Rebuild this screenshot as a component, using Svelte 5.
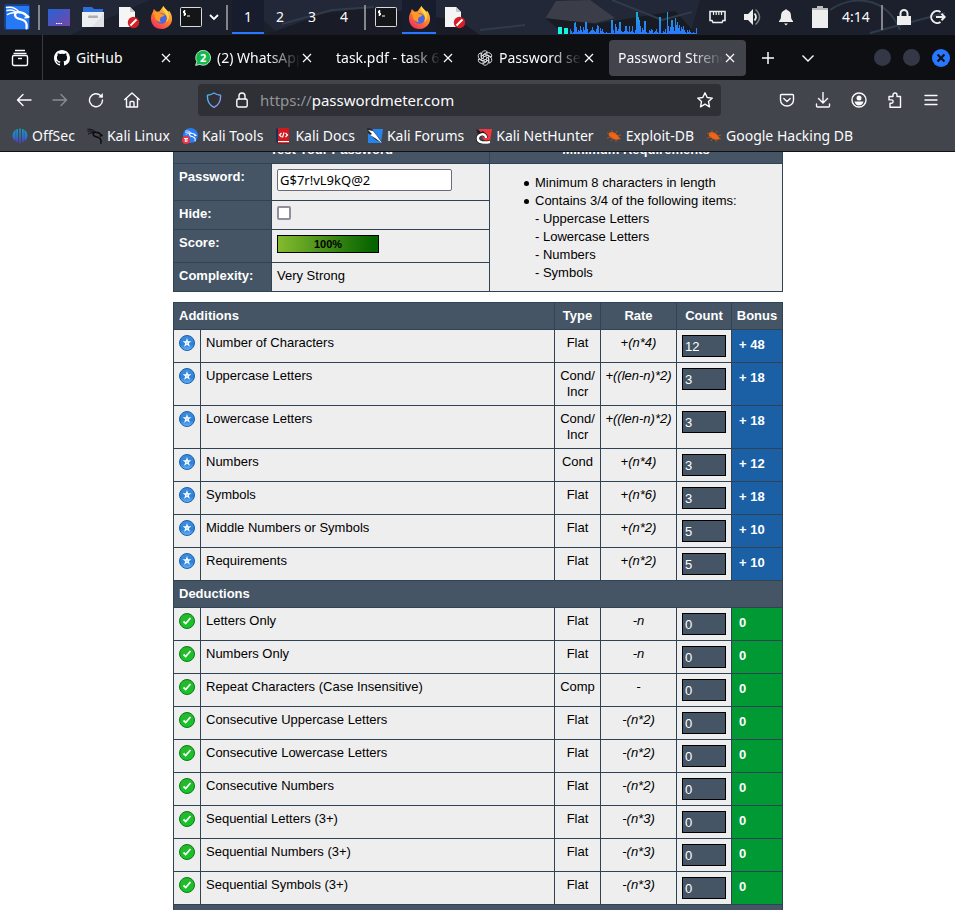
<script>
  const additions = [
    ['Number of Characters', 'Flat', '+(n*4)', '12', '+ 48'],
    ['Uppercase Letters', 'Cond/ Incr', '+((len-n)*2)', '3', '+ 18'],
    ['Lowercase Letters', 'Cond/ Incr', '+((len-n)*2)', '3', '+ 18'],
    ['Numbers', 'Cond', '+(n*4)', '3', '+ 12'],
    ['Symbols', 'Flat', '+(n*6)', '3', '+ 18'],
    ['Middle Numbers or Symbols', 'Flat', '+(n*2)', '5', '+ 10'],
    ['Requirements', 'Flat', '+(n*2)', '5', '+ 10'],
  ];
  const deductions = [
    ['Letters Only', 'Flat', '-n', '0', '0'],
    ['Numbers Only', 'Flat', '-n', '0', '0'],
    ['Repeat Characters (Case Insensitive)', 'Comp', '-', '0', '0'],
    ['Consecutive Uppercase Letters', 'Flat', '-(n*2)', '0', '0'],
    ['Consecutive Lowercase Letters', 'Flat', '-(n*2)', '0', '0'],
    ['Consecutive Numbers', 'Flat', '-(n*2)', '0', '0'],
    ['Sequential Letters (3+)', 'Flat', '-(n*3)', '0', '0'],
    ['Sequential Numbers (3+)', 'Flat', '-(n*3)', '0', '0'],
    ['Sequential Symbols (3+)', 'Flat', '-(n*3)', '0', '0'],
  ];
  const tabs = [
    { icon: 'github', title: 'GitHub' },
    { icon: 'whatsapp', title: '(2) WhatsApp' },
    { icon: '', title: 'task.pdf - task 6.' },
    { icon: 'openai', title: 'Password secu' },
    { icon: '', title: 'Password Streng', active: true },
  ];
  const bookmarks = [
    ['offsec', 'OffSec'],
    ['kali', 'Kali Linux'],
    ['tools', 'Kali Tools'],
    ['docs', 'Kali Docs'],
    ['forums', 'Kali Forums'],
    ['nethunter', 'Kali NetHunter'],
    ['bug', 'Exploit-DB'],
    ['bug', 'Google Hacking DB'],
  ];
  // heights of the sound monitor's bars, one pixel wide each
  const levels = [5, 3, 1, 2, 11, 12, 7, 2, 4, 3, 8, 4, 2, 7, 4, 12, 12, 5, 1, 2, 3, 4, 7, 4, 3, 2, 5, 9, 8, 1, 6, 3, 5, 2, 1, 1, 2, 1, 1, 1, 1, 14, 14, 4, 1, 10, 7, 3, 5, 12, 12, 3, 2, 2, 3, 8, 8, 3, 2, 8, 2, 3, 8, 2, 1, 4, 22, 22, 17, 14, 8, 2, 6, 4, 13, 13, 2, 1, 1, 4, 3, 5, 4, 1, 2, 3, 5, 2, 1, 17, 17, 1, 1, 3, 2, 5, 1, 22, 8, 3, 7, 14, 14, 7, 3, 16, 9, 12, 6, 9, 3, 7, 5, 8, 4, 2, 1, 4, 2, 4, 2, 1, 1, 2, 1, 1, 6];
  let password = $state('G$7r!vL9kQ@2');
  let hidden = $state(false);
</script>

{#snippet dragon(color)}
  <g fill="none" stroke={color} stroke-linecap="round" stroke-linejoin="round">
    <path stroke-width="1.5" d="M1 2c5-1 10 1 13 5M1.500 5c4-1 7 0 9 1.500M2 9c3-2 6-2 9-1.500" />
    <path stroke-width="2.200" d="M10 7c4-1 8 0 11 3l2 1.500-3 .5M10 7c-2 5 2 6 6 7 4 1 6 4 5 9" />
    <path stroke-width="1" d="M17 8c2-1 3 0 5 2" />
  </g>
{/snippet}

{#snippet firefox()}
  <svg width="23" height="23" viewBox="0 0 24 24" aria-hidden="true">
    <defs>
      <linearGradient id="fox" x1=".9" y1="0" x2=".2" y2="1">
        <stop offset="0" stop-color="#ffe35a" /><stop offset=".45" stop-color="#ff8a25" /><stop offset="1" stop-color="#f32b5e" />
      </linearGradient>
    </defs>
    <path fill="url(#fox)" d="M3 6l1-3 3 3 3-.500L14 0c1 3 4 4 5 6l1-1c3 4 4 9 2 13-2 4-6 6-10 6C5 24 1 19 1 13c0-3 1-5 2-7z" />
    <circle cx="12" cy="13" r="5.500" fill="#4a67df" />
    <path fill="#ff9a28" d="M3 7c3-2 6-1 8 1l4 1c0 2-3 2-4 3-1 2-1 4 1 5-5 0-7-4-7-7z" />
    <path fill="#ffd74b" d="M14 0c-1 4 1 6 3 9 2 3 1 6-1 8 3-1 5-5 3-10-1-3-4-4-5-7z" />
  </svg>
{/snippet}

{#snippet terminal()}
  <svg width="22" height="20" viewBox="0 0 22 20" aria-hidden="true">
    <rect x=".5" y=".5" width="21" height="19" rx="1" fill="#141517" stroke="#d8dadb" />
    <path d="M5.500 4H3.500v2h2v2h-2M4.500 3v6M7 9h3" fill="none" stroke="#fff" />
  </svg>
{/snippet}

{#snippet editor()}
  <svg width="22" height="23" viewBox="0 0 22 23" aria-hidden="true">
    <path fill="#f5f5f5" d="M1 1h11l5 5v15H1z" /><path fill="#c7c9cc" d="M12 1l5 5h-5z" />
    <circle cx="15.500" cy="16.500" r="5.700" fill="#d51e25" /><path stroke="#fff" stroke-width="2" d="M12.500 19.500l6-6" />
  </svg>
{/snippet}

{#snippet chevron()}
  <svg width="14" height="14" viewBox="0 0 14 14" fill="none" stroke="currentColor" stroke-width="1.400" aria-hidden="true"><path d="M1.500 4.500L7 10l5.500-5.500" /></svg>
{/snippet}

{#snippet favicon(name)}
  <svg width="16" height="16" viewBox="0 0 16 16" aria-hidden="true">
    {#if name === 'github'}
      <path fill="#fff" d="M8 0C3.580 0 0 3.580 0 8c0 3.540 2.290 6.530 5.470 7.590.4.070.55-.170.55-.380V13.720c-2.230.480-2.700-1.070-2.700-1.070-.360-.930-.890-1.170-.890-1.170-.730-.500.050-.490.050-.490.800.060 1.230.830 1.230.830.710 1.220 1.870.870 2.330.660.070-.520.280-.870.510-1.070-1.780-.200-3.640-.890-3.640-3.950 0-.870.310-1.590.820-2.150-.080-.200-.360-1.020.080-2.120 0 0 .670-.210 2.200.820a7.600 7.600 0 0 1 4 0c1.530-1.040 2.200-.820 2.200-.820.440 1.100.160 1.920.080 2.120.510.560.820 1.270.820 2.150 0 3.070-1.870 3.750-3.650 3.950.290.250.540.730.540 1.480v2.200c0 .210.150.460.550.380A8 8 0 0 0 16 8c0-4.420-3.580-8-8-8z" />
    {:else if name === 'whatsapp'}
      <path fill="#12b94c" stroke="#e9f9ee" stroke-width=".8" d="M.6 15.400l1.200-3.800A7.400 7.400 0 1 1 4.800 14.400z" />
      <text x="8.200" y="12" text-anchor="middle" fill="#fff" font-size="11" font-weight="700" font-family="Noto Sans, sans-serif">2</text>
    {:else if name === 'openai'}
      <g fill="none" stroke="#e8e8e8" stroke-width=".85">
        {#each [0, 60, 120, 180, 240, 300] as turn}
          <path transform="rotate({turn} 8 8)" d="M4.600 9.800V4A3.300 3.300 0 0 1 10.500 2L6.400 4.400v4.100" />
        {/each}
      </g>
    {:else if name === 'offsec'}
      <defs><linearGradient id="off" gradientUnits="userSpaceOnUse" x1="0" y1="0" x2="0" y2="16"><stop stop-color="#159fb2" /><stop offset=".5" stop-color="#2777ce" /><stop offset="1" stop-color="#6330c4" /></linearGradient></defs>
      <g fill="url(#off)"><path d="M6 1v13C2.500 13.500.5 10.500.5 7.500S2.500 1.500 6 1z" /><path d="M7.200.6h1.600v15H7.200z" /><path d="M10 1v13c3.500-.5 5.500-3.500 5.500-6.500S13.500 1.500 10 1z" /></g>
      <path stroke="#42454c" stroke-width=".5" d="M3.800 1v13M12.200 1v13" />
    {:else if name === 'kali'}
      <g transform="scale(.66)">{@render dragon('#0b0c0e')}</g>
    {:else if name === 'tools'}
      <circle cx="8.500" cy="7.500" r="7.500" fill="#2b7bf3" /><g transform="translate(3 2) scale(.48)">{@render dragon('#fff')}</g>
      <circle cx="4" cy="12" r="4" fill="#ef3340" /><path stroke="#fff" d="M2 10.500h4M3.300 10.500v3.500M4.900 10.500v3.500" />
    {:else if name === 'docs'}
      <path fill="#173056" d="M1 1l2-1v15l-2-1z" /><path fill="#d31920" d="M3 0h11v13H3z" /><path fill="#fff" d="M3 13h11v1.500H3z" /><path fill="#9d0e16" d="M3 14.500h11V16H2z" />
      <path fill="none" stroke="#fff" stroke-width="1.200" d="M6.500 5L4.500 7l2 2M10.500 5l2 2-2 2M9 4.500l-1.500 5" />
    {:else if name === 'forums'}
      <path fill="#2584ed" d="M1 1h15l-2 14H1z" /><path fill="#23262b" d="M0 0l5 1 10 13-6-2L1 5z" /><path fill="#fff" d="M1 2l5 1 4 5 5 7-7-5-5-3 2-1z" />
    {:else if name === 'nethunter'}
      <path fill="#f0363e" d="M3 1h13l-2 13-4 1L4 6z" /><path fill="#1c1d20" d="M0 1l5 3 2-1 2 2-6 4z" /><path fill="none" stroke="#1c1d20" stroke-width="4" d="M10 10c0-6-9-4-8 1 0 4 7 4 12 3" /><path fill="none" stroke="#fff" stroke-width="2.500" d="M10 10c0-6-9-4-8 1 0 4 7 4 12 3" />
    {:else}
      <path fill="#ee6514" d="M3 5c2-2 5-1 7 1 2 1 3 3 4 5-3 1-6 1-8-1C4 9 2 8 3 5z" />
      <path fill="none" stroke="#cf5a19" stroke-width=".7" d="M6 6V2M9 6l2-3M5 6L1 5M5 9l-4 1M7 10l-2 3M10 11v3M11 8l4-1M12 10l3 1" />
    {/if}
  </svg>
{/snippet}

{#snippet rows(list, kind)}
  {#each list as [name, type, rate, count, bonus]}
    <tr>
      <td>
        <svg width="16" height="16" viewBox="0 0 16 16" role="img" aria-label={kind}>
          {#if kind === 'exceptional'}
            <circle cx="8" cy="8" r="7.500" fill="url(#blueBall)" stroke="#1862ae" />
            <path fill="#fff" d="M8 3l1.100 3.200h3.300L9.800 8.300l1.100 3.500L8 9.800l-2.900 2 1.100-3.500-2.600-2.100h3.300z" /><circle cx="8" cy="8" r=".7" fill="#72b5f3" />
          {:else}
            <circle cx="8" cy="8" r="7.500" fill="url(#greenBall)" stroke="#087c16" />
            <path fill="none" stroke="#fff" stroke-width="1.700" d="M4.500 8.500l2.200 2L11.500 5" />
          {/if}
        </svg>
      </td>
      <td>{name}</td>
      <td class="mid">{type}</td>
      <td class="mid rate">{rate}</td>
      <td><input class="count" readonly value={count} aria-label="{name} count" /></td>
      <td class="bonus {kind}">{bonus}</td>
    </tr>
  {/each}
{/snippet}

<svg class="defs" width="0" height="0" aria-hidden="true">
  <defs>
    <linearGradient id="blueBall" x2="0" y2="1"><stop stop-color="#3f8ddd" /><stop offset=".6" stop-color="#2c82dc" /><stop offset="1" stop-color="#6bb4f4" /></linearGradient>
    <linearGradient id="greenBall" x2="0" y2="1"><stop stop-color="#29b52d" /><stop offset="1" stop-color="#14c62a" /></linearGradient>
  </defs>
</svg>

<div class="screen">
  <header class="panel">
    <svg class="wallpaper" viewBox="0 0 955 35" preserveAspectRatio="none" aria-hidden="true">
      <path fill="#222838" d="M0 0h955v35H0z" /><path fill="#1b202c" d="M70 35L150 0h90l40 35zM700 0h255v35H690z" />
      <path fill="#191c26" d="M265 35l60-22 50-6 85 14 20 14z" /><path fill="#3b3e48" d="M556 1l34-1 25 18-20 5-50-4z" /><path fill="#181b23" d="M545 18l50 6 80-13 22 24H565z" />
      <path fill="none" stroke="#303b4a" stroke-width="2" d="M282 24l50-14 42-3M480 30l45-5M612 0l50 20 30-8M870 33l75-20M830 10c20-14 55-16 70 20" />
    </svg>
    <nav class="launchers" aria-label="Launchers">
      <button class="w34" aria-label="Applications">
        <svg width="28" height="28" viewBox="0 0 28 28" aria-hidden="true"><rect x="1" y="1" width="26" height="26" rx="3" fill="#1158cc" opacity=".55" /><path fill="#2678f5" d="M3 3h23v23H3z" /><g transform="translate(2.500 2.500)">{@render dragon('#fff')}</g></svg>
      </button>
      <span class="sep"></span>
      <button class="w30" aria-label="Show desktop">
        <svg width="22" height="17" viewBox="0 0 22 17" aria-hidden="true"><defs><linearGradient id="desk" y2="1"><stop stop-color="#2862d5" /><stop offset="1" stop-color="#7447a8" /></linearGradient></defs><path fill="url(#desk)" d="M0 0h22v17H0z" /><path stroke="#fff" stroke-dasharray="1.500 .800" d="M8 14.500h6" /></svg>
      </button>
      <button class="w38" aria-label="Files">
        <svg width="22" height="20" viewBox="0 0 22 20" aria-hidden="true"><path fill="#2b6fdd" d="M1 0h9l2 2h9v6H1z" /><path fill="#eceef0" d="M0 5h22v15H0z" /><path fill="#dfe1e4" d="M22 6v14H10z" /><rect x="6" y="8.500" width="10" height="2.500" rx="1" fill="#aaaeb4" /></svg>
      </button>
      <button class="w34" aria-label="Text editor">{@render editor()}</button>
      <button class="w30" aria-label="Firefox">{@render firefox()}</button>
      <button class="w30" aria-label="Terminal">{@render terminal()}</button>
      <button class="w16" aria-label="More terminals"><svg width="10" height="10" viewBox="0 0 10 10" fill="none" stroke="#fff" stroke-width="1.800" aria-hidden="true"><path d="M1 3l4 4 4-4" /></svg></button>
      <span class="sep"></span>
      {#each [1, 2, 3, 4] as space}
        <button class="w32" class:current={space === 1}>{space}</button>
      {/each}
      <span class="sep"></span>
      <button class="w32" aria-label="Terminal window">{@render terminal()}</button>
      <button class="w34 current" aria-label="Firefox window">{@render firefox()}</button>
      <button class="w38" aria-label="Editor window">{@render editor()}</button>
    </nav>
    <div class="tray">
      <svg class="meter" width="141" height="24" viewBox="0 0 141 24" aria-hidden="true">
        <defs><linearGradient id="sound" gradientUnits="userSpaceOnUse" x1="0" y1="24" x2="0" y2="0"><stop stop-color="#2979ff" /><stop offset=".4" stop-color="#258af0" /><stop offset="1" stop-color="#12b5d8" /></linearGradient></defs>
        <path fill="#13f5df" d="M0 17h4v7H0zM6 18h4v6H6z" />
        {#each levels as level, i}<rect x={12 + i} y={24 - level} width="1" height={level} fill="url(#sound)" />{/each}
      </svg>
      <button class="w36" aria-label="Network"><svg width="17" height="15" viewBox="0 0 17 15" aria-hidden="true"><path fill="none" stroke="#eee" stroke-width="1.600" d="M1 1.500h15v9h-2l-1 2H4l-1-2H1z" /><path stroke="#eee" stroke-width="1.200" d="M4.500 1v4M7.200 1v4M9.800 1v4M12.500 1v4" /></svg></button>
      <button class="w34" aria-label="Volume"><svg width="19" height="18" viewBox="0 0 19 18" aria-hidden="true"><path fill="#eee" d="M1 6h4l5-5v16l-5-5H1z" /><path fill="none" stroke="#eee" stroke-width="1.800" d="M11.500 5.500q3 3.500 0 7" /><path fill="none" stroke="#777b82" stroke-width="1.600" d="M12.500 1.500q8 7.500 0 15" /></svg></button>
      <button class="w34" aria-label="Notifications"><svg width="16" height="17" viewBox="0 0 16 17" aria-hidden="true"><path fill="#eee" d="M8 0l1 1c3 1 4 3 4 6 0 3 1 4 2 5v1H1v-1c1-1 2-2 2-5 0-3 1-5 4-6zM6 14.500h4l-2 2z" /></svg></button>
      <button class="w34" aria-label="Battery"><svg width="16" height="22" viewBox="0 0 16 22" aria-hidden="true"><path fill="#bbb" d="M5 0h6v2h5v3H0V2h5z" /><path fill="#eee" d="M0 4h16v18H0z" /></svg></button>
      <time>4:14</time>
      <span class="sep"></span>
      <button class="w34" aria-label="Lock"><svg width="14" height="16" viewBox="0 0 14 16" aria-hidden="true"><path fill="none" stroke="#eee" stroke-width="2" d="M3.500 8V4.500a3.500 3.500 0 0 1 7 0V8" /><path fill="#eee" d="M0 7h14v9H0z" /></svg></button>
      <button class="w34" aria-label="Log out"><svg width="16" height="16" viewBox="0 0 16 16" fill="none" stroke="#eee" stroke-width="2" aria-hidden="true"><path d="M10.500 3A6 6 0 1 0 10.500 13M6 8h8M11.500 4.800L14.700 8l-3.200 3.200" /></svg></button>
    </div>
  </header>

  <div class="tabbar">
    <button class="recent" aria-label="Recent browsing">
      <svg width="18" height="18" viewBox="0 0 18 18" fill="none" stroke="currentColor" stroke-width="1.400" aria-hidden="true"><path d="M4 1.500h10M2.500 4.500h13" /><rect x="1.500" y="6.500" width="15" height="10" rx="1.500" /><path d="M7 9.500h4" /></svg>
    </button>
    <div class="tabs">
      {#each tabs as tab}
        <div class="tab" class:active={tab.active}>
          {#if tab.icon}{@render favicon(tab.icon)}{/if}
          <a href="#{tab.icon || 'page'}">{tab.title}</a>
          <button aria-label="Close {tab.title}"><svg width="10" height="10" viewBox="0 0 10 10" stroke="currentColor" stroke-width="1.200" aria-hidden="true"><path d="M1 1l8 8M9 1L1 9" /></svg></button>
        </div>
      {/each}
    </div>
    <button class="w40" aria-label="New tab"><svg width="12" height="12" viewBox="0 0 12 12" stroke="currentColor" stroke-width="1.500" aria-hidden="true"><path d="M6 0v12M0 6h12" /></svg></button>
    <button class="w40" aria-label="List all tabs">{@render chevron()}</button>
    <div class="window">
      <button aria-label="Minimise"></button>
      <button aria-label="Maximise"></button>
      <button class="close" aria-label="Close window"><svg width="8" height="8" viewBox="0 0 8 8" stroke="#10131a" stroke-width="2.200" aria-hidden="true"><path d="M.5.5l7 7M7.500.5l-7 7" /></svg></button>
    </div>
  </div>

  <div class="toolbar">
    <div class="nav">
      <button aria-label="Back"><svg width="16" height="16" viewBox="0 0 16 16" aria-hidden="true"><path d="M15 8H1.500M7 2.500L1.500 8 7 13.500" /></svg></button>
      <button class="dim" aria-label="Forward"><svg width="16" height="16" viewBox="0 0 16 16" aria-hidden="true"><path d="M1 8h13.500M9 2.500L14.500 8 9 13.500" /></svg></button>
      <button aria-label="Reload"><svg width="16" height="16" viewBox="0 0 16 16" aria-hidden="true"><path d="M14.500 8A6.500 6.500 0 1 1 12.500 3.500L14 5" /><path d="M14.800 1v4.500h-4.500z" fill="currentColor" stroke="none" /></svg></button>
      <button aria-label="Home"><svg width="16" height="16" viewBox="0 0 16 16" aria-hidden="true"><path d="M.8 7.500L8 1l7.200 6.500M2.500 6.500v8.500h11V6.500M6 15v-4.500q0-1 1-1h2q1 0 1 1V15" /></svg></button>
      <div class="url">
        <svg width="16" height="16" viewBox="0 0 16 16" aria-hidden="true"><defs><linearGradient id="shield" y2="1"><stop stop-color="#39bdf4" /><stop offset="1" stop-color="#a18cf0" /></linearGradient></defs><path stroke="url(#shield)" d="M8 1q3 1.800 6.500 2.200C15 9 13 13 8 15.300 3 13 1 9 1.500 3.200Q5 2.800 8 1z" /></svg>
        <svg class="lock" width="12" height="16" viewBox="0 0 12 16" aria-hidden="true"><path d="M3 7V4a3 3 0 0 1 6 0v3" /><rect x=".8" y="7" width="10.400" height="8" rx="1.500" /></svg>
        <a href="https://passwordmeter.com"><span>https://</span>passwordmeter.com</a>
        <svg width="16" height="16" viewBox="0 0 16 16" aria-hidden="true"><path d="M8 .8l2.200 4.700 5.100.6-3.800 3.500 1 5.200L8 12.200l-4.500 2.600 1-5.200L.7 6.100l5.100-.6z" /></svg>
      </div>
      <button aria-label="Pocket"><svg width="16" height="16" viewBox="0 0 16 16" aria-hidden="true"><path d="M2.500 2.500h11q1 0 1 1V8a6.500 6 0 0 1-13 0V3.500q0-1 1-1zM4.800 6.500L8 9.500l3.200-3" /></svg></button>
      <button aria-label="Downloads"><svg width="16" height="16" viewBox="0 0 16 16" aria-hidden="true"><path d="M8 .5v10M3.500 6.500L8 11l4.500-4.500M1.500 12v2q0 1 1 1h11q1 0 1-1v-2" /></svg></button>
      <button aria-label="Account"><svg width="16" height="16" viewBox="0 0 16 16" aria-hidden="true"><circle cx="8" cy="8" r="7" /><circle cx="8" cy="6" r="2.500" fill="currentColor" stroke="none" /><path d="M3.500 9.500h9q-1 4-4.500 4t-4.500-4z" fill="currentColor" stroke="none" /></svg></button>
      <button aria-label="Extensions"><svg width="16" height="16" viewBox="0 0 16 16" aria-hidden="true"><path d="M6 4.500V3a2 2 0 0 1 4 0v1.500h3.500v10.700H3v-4h1.500a1.600 1.600 0 0 0 0-3.300H2V4.500z" /></svg></button>
      <button aria-label="Menu"><svg width="14" height="16" viewBox="0 0 14 16" aria-hidden="true"><path d="M1 3.500h12M1 8h12M1 12.500h12" /></svg></button>
    </div>
    <nav class="bookmarks" aria-label="Bookmarks">
      {#each bookmarks as [icon, name]}
        <a href="#{icon}">{@render favicon(icon)}{name}</a>
      {/each}
    </nav>
  </div>

  <main>
    <table class="summary">
      <colgroup><col class="c98" /><col /><col class="c293" /></colgroup>
      <thead><tr><th class="mid" colspan="2">Test Your Password</th><th class="mid">Minimum Requirements</th></tr></thead>
      <tbody>
        <tr class="tall">
          <th><label for="pw">Password:</label></th>
          <td>
            {#if hidden}<input id="pw" class="pw" type="password" bind:value={password} />
            {:else}<input id="pw" class="pw" type="text" spellcheck="false" bind:value={password} />{/if}
          </td>
          <td rowspan="4">
            <ul>
              <li>Minimum 8 characters in length</li>
              <li>Contains 3/4 of the following items:<br />- Uppercase Letters<br />- Lowercase Letters<br />- Numbers<br />- Symbols</li>
            </ul>
          </td>
        </tr>
        <tr class="short"><th><label for="hide">Hide:</label></th><td><input id="hide" type="checkbox" bind:checked={hidden} /></td></tr>
        <tr class="middle"><th>Score:</th><td><div class="score">100%</div></td></tr>
        <tr class="short"><th>Complexity:</th><td>Very Strong</td></tr>
      </tbody>
    </table>

    <table>
      <colgroup><col class="c27" /><col /><col class="c46" /><col class="c76" /><col class="c55" /><col class="c51" /></colgroup>
      <thead><tr><th colspan="2">Additions</th><th class="mid">Type</th><th class="mid">Rate</th><th class="mid">Count</th><th class="mid">Bonus</th></tr></thead>
      <tbody>
        {@render rows(additions, 'exceptional')}
        <tr><th colspan="6">Deductions</th></tr>
        {@render rows(deductions, 'sufficient')}
        <tr class="short"><th colspan="6"></th></tr>
      </tbody>
    </table>
  </main>
</div>

<style>
  :global(body) { margin: 0; background: #fff; }
  * { box-sizing: border-box; }
  svg { display: block; flex: none; }
  .defs { position: absolute; }
  .screen { height: 100vh; display: flex; flex-direction: column; overflow: hidden; font: 14px/20px "Noto Sans", sans-serif; color: #fbfbfe; }
  button { display: flex; align-items: center; justify-content: center; flex: none; padding: 0; border: 0; background: none; color: inherit; font: inherit; }
  a { color: inherit; text-decoration: none; }

  .panel { position: relative; flex: none; height: 35px; display: flex; justify-content: space-between; background: #1e232f; }
  .wallpaper { position: absolute; inset: 0; width: 100%; height: 100%; }
  .launchers, .tray { position: relative; display: flex; align-items: stretch; height: 34px; }
  .sep { width: 10px; flex: none; background: linear-gradient(#84868b, #84868b) center / 2px 25px no-repeat; }
  .current { background: #171d2d; border-bottom: 2px solid #2777ff; padding-top: 2px; }
  .w16 { width: 16px; } .w30 { width: 30px; } .w32 { width: 32px; } .w34 { width: 34px; } .w36 { width: 36px; } .w38 { width: 38px; } .w40 { width: 40px; }
  .meter { align-self: flex-end; }
  time { width: 40px; padding-left: 5px; display: flex; align-items: center; }

  .tabbar { flex: none; height: 45px; display: flex; align-items: center; background: #0e0f13; padding-right: 5px; }
  .recent { width: 43px; height: 45px; padding-right: 3px; border-right: 1px solid #3a3b40; }
  .tabs { flex: 0 1 705px; min-width: 0; display: flex; gap: 4px; padding: 0 2px; }
  .tab { flex: 1 1 0; min-width: 0; height: 36px; display: flex; align-items: center; gap: 6px; padding: 0 9px; border-radius: 4px; }
  .tab.active { background: #42444c; }
  .tab a { flex: 1; min-width: 0; overflow: hidden; white-space: nowrap; mask-image: linear-gradient(to right, #000 calc(100% - 32px), transparent); }
  .tab:first-child a { mask-image: none; }
  .tab button { width: 14px; height: 20px; margin-left: -6px; }
  .window { margin-left: auto; display: flex; align-items: center; gap: 12px; }
  .window button { width: 17px; height: 17px; border-radius: 50%; background: #343846; }
  .window .close { width: 18px; height: 18px; background: #2777ff; }

  .toolbar { flex: none; height: 72px; background: #42454c; border-bottom: 1px solid #101114; }
  .nav { display: flex; align-items: center; padding: 4px 6px 0; height: 36px; }
  .nav button { width: 36px; height: 32px; }
  .nav svg { fill: none; stroke: currentColor; stroke-width: 1.400; stroke-linecap: round; stroke-linejoin: round; }
  .nav .dim { color: #8b8d92; }
  .url { flex: 1; height: 32px; margin: 0 48px; padding: 0 8px; display: flex; align-items: center; background: #2e3035; border-radius: 4px; }
  .url .lock { margin: 0 12px 0 14px; }
  .url a { flex: 1; font-size: 15px; }
  .url span { color: #939499; }
  .bookmarks { display: flex; align-items: center; gap: 12px; height: 35px; padding: 4px 12px 0; white-space: nowrap; }
  .bookmarks a { display: flex; align-items: center; gap: 4px; }

  main { flex: 1; min-height: 0; overflow: hidden; padding-left: 1px; background: #fff; color: #000; font: 13px/16px "Liberation Sans", Arial, sans-serif; }
  table { width: 610px; max-width: 100%; margin: 0 auto; border-collapse: collapse; table-layout: fixed; }
  .summary { margin-top: -16px; margin-bottom: 10px; }
  .c98 { width: 98px; } .c293 { width: 293px; } .c27 { width: 27px; } .c46 { width: 46px; } .c76 { width: 76px; } .c55 { width: 55px; } .c51 { width: 51px; }
  td, th { padding: 5px; border: 1px solid #304354; vertical-align: top; text-align: left; background: #eee; }
  th { background: #455565; color: #fff; }
  .mid { text-align: center; padding-left: 0; padding-right: 0; }
  .rate { font-style: italic; }
  .tall { height: 37px; } .short { height: 29px; } .middle { height: 33px; }
  .pw { display: block; width: 175px; height: 22px; padding: 0 2px; border: 1px solid #6b6a7a; border-radius: 2px; background: #fff; color: #000; font: 13px/20px "Noto Sans", sans-serif; }
  input[type="checkbox"] { appearance: none; display: block; width: 14px; height: 14px; margin: 0; border: 2px solid #8f8f9d; border-radius: 2px; background: #fff; }
  input[type="checkbox"]:checked { background: #2777ff; }
  .score { width: 102px; height: 18px; border: 1px solid #000; background: linear-gradient(to right, #84ba2e, #066400 95%); text-align: center; font-size: 11px; font-weight: 700; }
  ul { margin: 5px 0 0; padding-left: 40px; line-height: 18px; list-style: none; }
  li { position: relative; }
  li::before { content: ""; position: absolute; left: -11px; top: 7px; width: 5px; height: 5px; border-radius: 50%; background: #000; }
  .count { display: block; width: 44px; height: 22px; padding: 0 2px; border: 1px solid #000; border-radius: 0; background: #455565; color: #fff; font: inherit; }
  .bonus { padding: 7px; color: #fff; font-weight: 700; }
  .exceptional { background: #1b60a5; }
  .sufficient { background: #009933; }
</style>
